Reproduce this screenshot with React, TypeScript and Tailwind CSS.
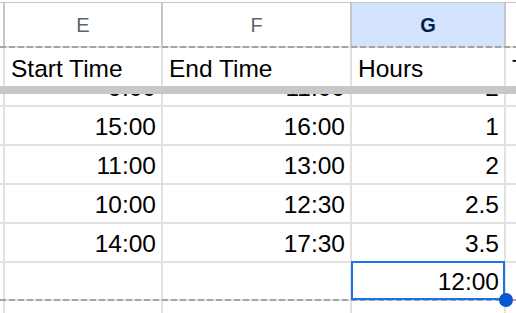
import React from "react";

const font = "font-['Liberation_Sans',Arial,sans-serif]";
const grid = "border-[#e1e1e1]";

type RowProps = { e?: string; f?: string; g?: string; h?: string; height: string; bottom?: "line" | "none"; selected?: boolean };

function DataRow({ e, f, g, h, height, bottom = "line", selected }: RowProps) {
  const cell = `flex items-end overflow-hidden pb-[5px] border-l-2 ${grid}`;
  return (
    <div className={`flex ${height} ${bottom === "line" ? `border-b-2 ${grid}` : ""}`}>
      <div className="w-[3px] shrink-0" />
      <div className={`${cell} w-[158px] shrink-0 justify-end pr-[5px]`}>
        <span className="leading-none whitespace-nowrap">{e}</span>
      </div>
      <div className={`${cell} w-[189px] shrink-0 justify-end pr-[5px]`}>
        <span className="leading-none whitespace-nowrap">{f}</span>
      </div>
      <div className={`${cell} w-[154px] shrink-0 justify-end pr-[5px] ${selected ? "relative !overflow-visible" : ""}`}>
        <span className="leading-none whitespace-nowrap">{g}</span>
        {selected && (
          <>
            <div className="absolute -left-[1px] -right-[1px] -top-[2px] -bottom-[1px] border-2 border-[#1a73e8] z-10" />
            <div className="absolute left-[147px] top-[30px] w-[14px] h-[14px] rounded-full bg-[#0b57d0] z-20" />
          </>
        )}
      </div>
      <div className={`${cell} flex-1 justify-start pl-[6px]`}>
        <span className="leading-none whitespace-nowrap">{h}</span>
      </div>
    </div>
  );
}

function Dashed() {
  return <div className="h-[2px] w-full bg-[repeating-linear-gradient(90deg,#a3a3a3_0_6px,#dedede_6px_9px)]" />;
}

export default function App() {
  return (
    <div className={`${font} w-[516px] h-[313px] overflow-hidden bg-white text-black text-[24.5px]`}>
      <div className="h-[2px]" />
      {/* column header */}
      <div className="flex h-[44px] border-t border-[#c4c7c5] text-[20px]">
        <div className="w-[3px] shrink-0" />
        <div className="w-[158px] shrink-0 border-l-2 border-[#c4c7c5] flex items-center justify-center text-[#5f6368]">E</div>
        <div className="w-[189px] shrink-0 border-l-2 border-[#c4c7c5] flex items-center justify-center text-[#5f6368]">F</div>
        <div className="w-[154px] shrink-0 border-l-2 border-[#c4c7c5] flex items-center justify-center bg-[#d3e3fd] font-bold text-[#041e49]">G</div>
        <div className="flex-1 border-l-2 border-[#c4c7c5]" />
      </div>
      <Dashed />
      {/* header row */}
      <DataRow e="" f="" g="" h="" height="h-[38px]" bottom="none" />
      <div className="h-[38px] -mt-[38px] relative flex">
        <div className="w-[3px] shrink-0" />
        <div className="w-[158px] shrink-0 pl-[8px] flex items-end pb-[5px]"><span className="leading-none">Start Time</span></div>
        <div className="w-[189px] shrink-0 pl-[8px] flex items-end pb-[5px]"><span className="leading-none">End Time</span></div>
        <div className="w-[154px] shrink-0 pl-[8px] flex items-end pb-[5px]"><span className="leading-none">Hours</span></div>
        <div className="flex-1 pl-[8px] flex items-end pb-[5px] overflow-hidden"><span className="leading-none whitespace-nowrap">Total</span></div>
      </div>
      {/* freeze bar */}
      <div className="h-[8px] bg-[#c8c8c8]" />
      <DataRow e="9:00" f="11:00" g="2" height="h-[13px]" />
      <DataRow e="15:00" f="16:00" g="1" height="h-[39px]" />
      <DataRow e="11:00" f="13:00" g="2" height="h-[39px]" />
      <DataRow e="10:00" f="12:30" g="2.5" height="h-[39px]" />
      <DataRow e="14:00" f="17:30" g="3.5" height="h-[39px]" />
      <DataRow g="12:00" height="h-[36px]" bottom="none" selected />
      <Dashed />
      <DataRow height="h-[20px]" bottom="none" />
    </div>
  );
}
